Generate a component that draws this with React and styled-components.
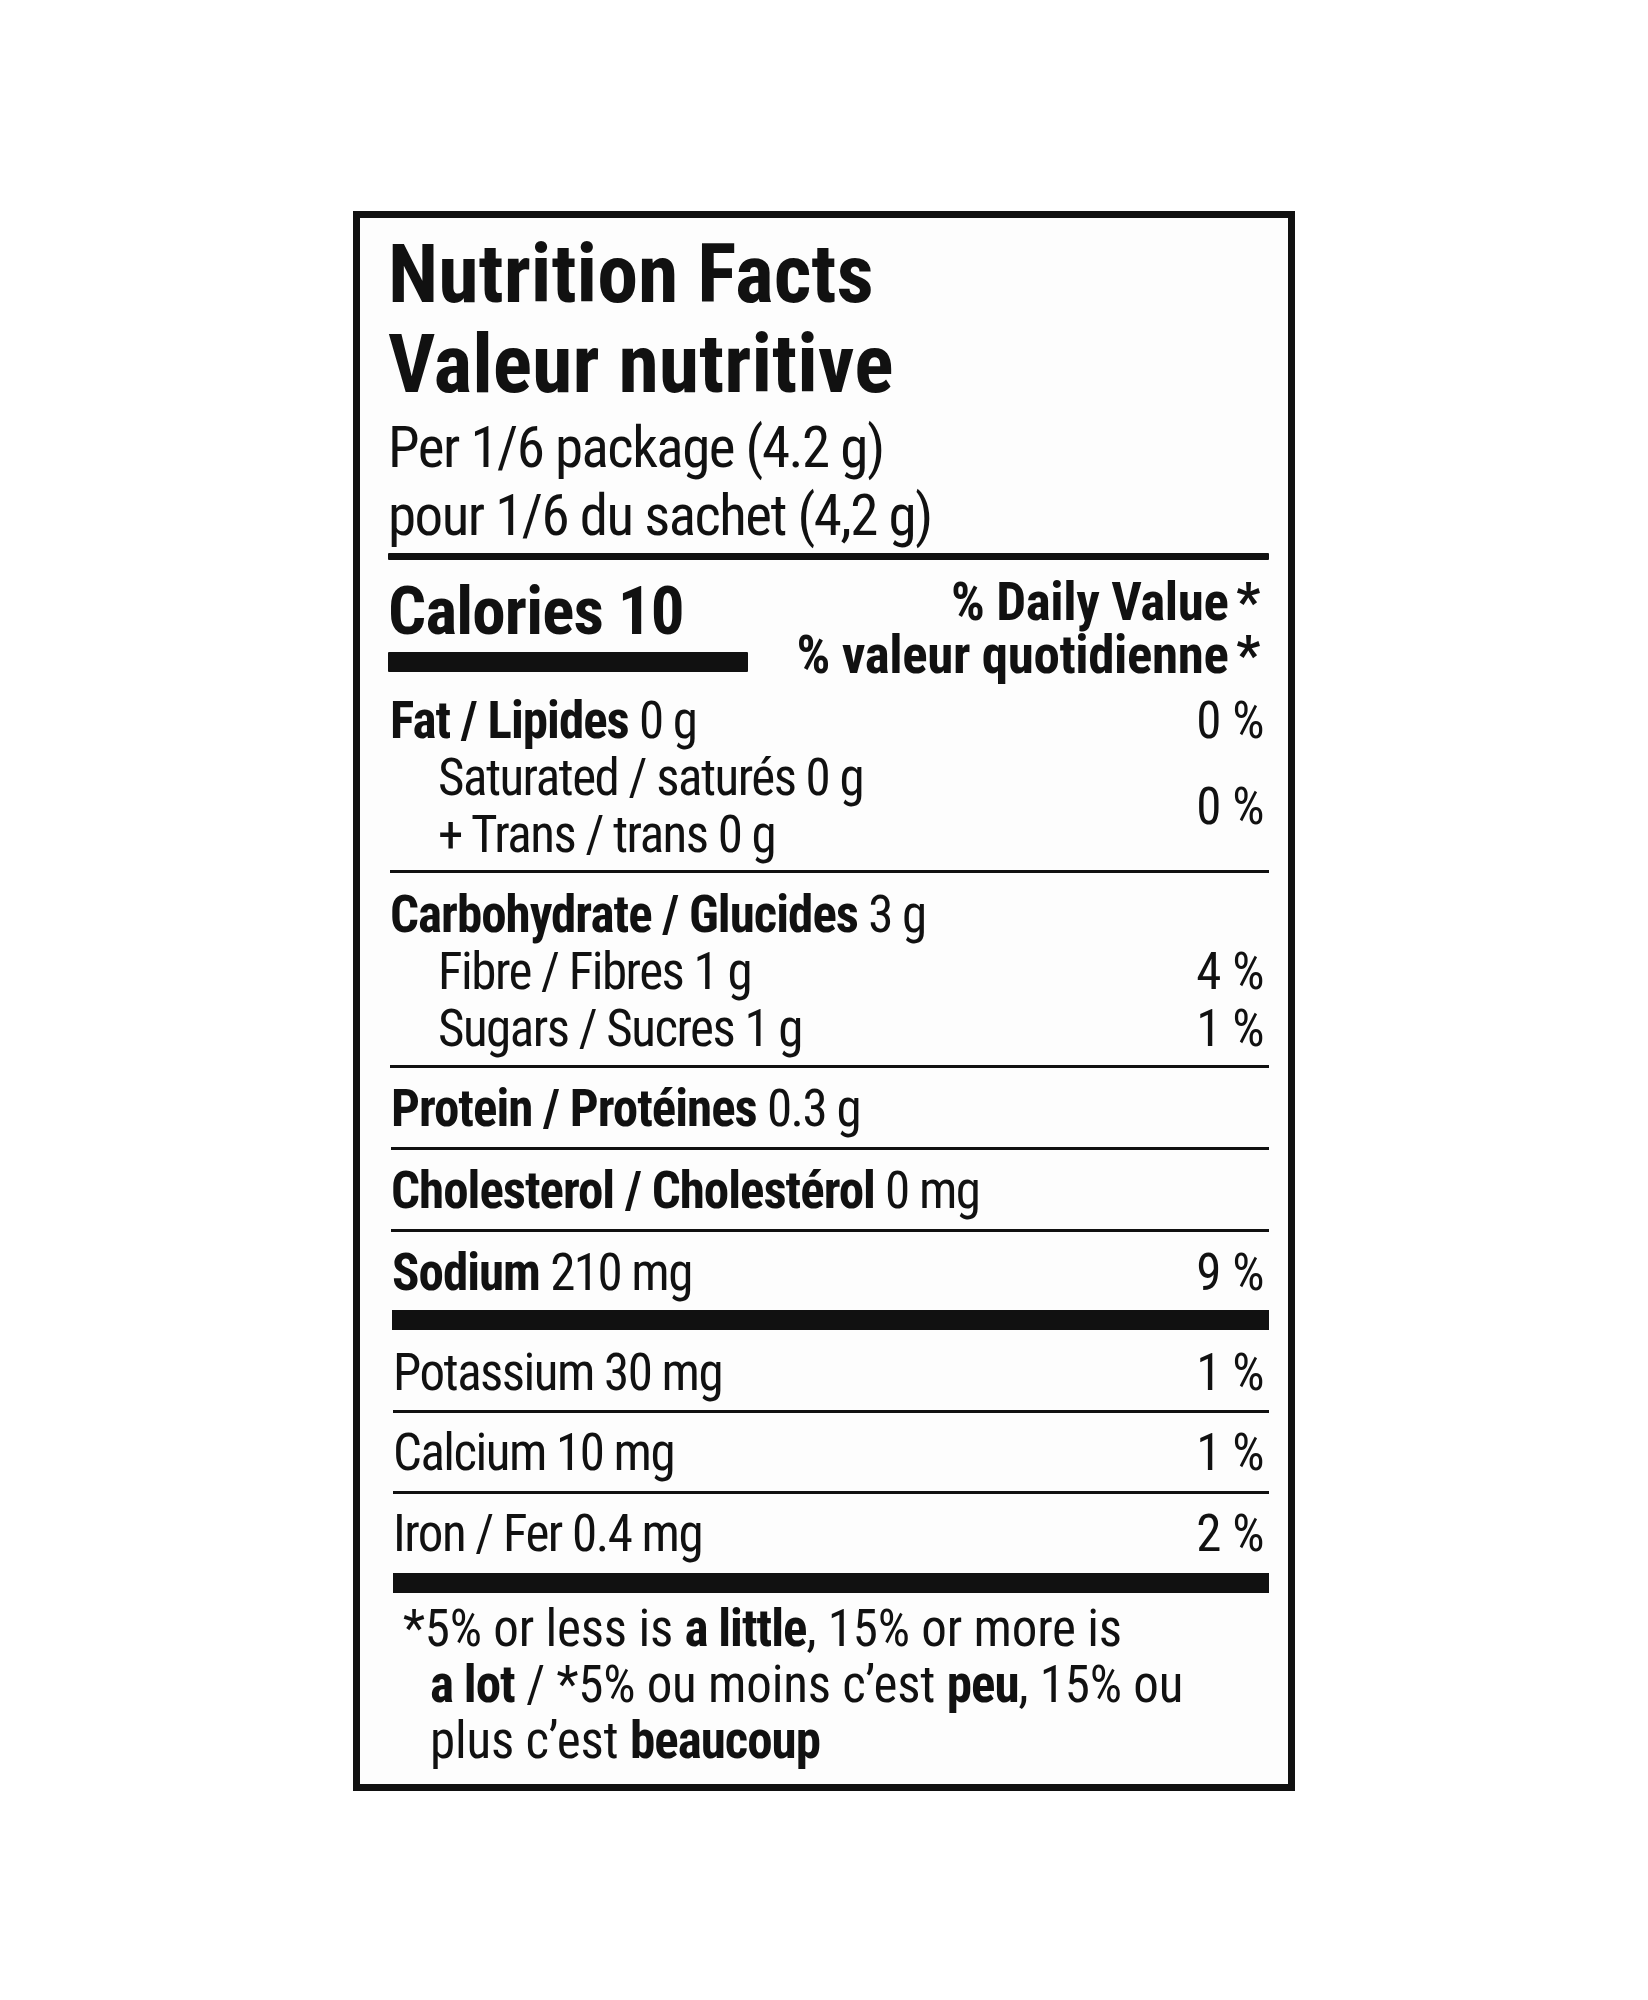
import React from 'react';
import styled, { createGlobalStyle } from 'styled-components';

const FONT = `'Roboto Condensed', 'Liberation Sans', sans-serif`;

const Global = createGlobalStyle`
  html, body { margin: 0; padding: 0; background: #ffffff; }
  body { font-family: ${FONT}; color: #111111; }
`;

const Page = styled.div`
  box-sizing: border-box;
  min-height: 2000px;
  padding: 211px 0 0 353px;
`;

const Label = styled.section`
  box-sizing: border-box;
  width: 942px;
  border: 7px solid #111111;
  background: #fdfdfd;
  padding: 11px 19px 15px 28px;
  display: flex;
  flex-direction: column;
`;

const Title = styled.h1`
  margin: 0;
  font-size: 82px;
  line-height: 90px;
  font-weight: 700;
`;

const Serving = styled.p`
  margin: ${p => (p.$first ? '5px' : '0')} 0 0;
  font-size: 57px;
  line-height: 68px;
  font-weight: 400;
  letter-spacing: -1.5px;
`;

const Bar = styled.div`
  height: ${p => p.$h}px;
  margin-top: ${p => p.$mt || 0}px;
  width: ${p => p.$w || '100%'};
  background: #111111;
  border-radius: 1px;
`;

const CaloriesSection = styled.div`
  display: flex;
  justify-content: space-between;
  align-items: flex-start;
  padding: 15px 0 10px;
`;

const CaloriesCol = styled.div`
  display: flex;
  flex-direction: column;
`;

const Calories = styled.div`
  font-size: 67px;
  line-height: 72px;
  font-weight: 700;
  letter-spacing: -0.8px;
`;

const DailyValue = styled.div`
  margin-top: 1px;
  padding-right: 9px;
  text-align: right;
  font-size: 53px;
  line-height: 53px;
  font-weight: 700;
  letter-spacing: -0.4px;
`;

const Star = styled.span`
  margin-left: 8px;
`;

const Section = styled.div`
  display: grid;
  grid-template-columns: 1fr auto;
  margin-left: ${p => p.$inset || 0}px;
  padding: ${p => p.$pt}px 0 ${p => p.$pb}px;
  border-bottom: ${p => p.$rule}px solid #111111;
  font-size: 51px;
  line-height: 57px;
  letter-spacing: -1.5px;
`;

const Name = styled.div`
  grid-column: 1;
  padding-left: ${p => (p.$indent ? 48 : 0)}px;
  white-space: nowrap;
`;

const Val = styled.div`
  grid-column: 2;
  grid-row: ${p => (p.$span ? `span ${p.$span}` : 'auto')};
  align-self: center;
  padding-right: 5px;
  text-align: right;
  white-space: nowrap;
  letter-spacing: -0.5px;
`;

const B = styled.b`
  font-weight: 700;
  letter-spacing: -1px;
`;

const Foot = styled.p`
  margin: 0;
  padding: 8px 0 0 42px;
  text-indent: -27px;
  font-size: 51px;
  line-height: 56px;
  letter-spacing: -0.2px;
`;

export default function App() {
  return (
    <Page>
      <Global />
      <Label>
        <Title>
          Nutrition Facts
          <br />
          Valeur nutritive
        </Title>
        <Serving $first>Per 1/6 package (4.2 g)</Serving>
        <Serving>pour 1/6 du sachet (4,2 g)</Serving>
        <Bar $h={7} $mt={3} />

        <CaloriesSection>
          <CaloriesCol>
            <Calories>Calories 10</Calories>
            <Bar $h={20} $mt={5} $w="360px" />
          </CaloriesCol>
          <DailyValue>
            % Daily Value<Star>*</Star>
            <br />
            % valeur quotidienne<Star>*</Star>
          </DailyValue>
        </CaloriesSection>

        <Section $pt={0} $pb={7} $rule={3} $inset={2}>
          <Name>
            <B>Fat / Lipides</B> 0 g
          </Name>
          <Val>0 %</Val>
          <Name $indent>Saturated / saturés 0 g</Name>
          <Val $span={2}>0 %</Val>
          <Name $indent>+ Trans / trans 0 g</Name>
        </Section>

        <Section $pt={13} $pb={8} $rule={3} $inset={2}>
          <Name>
            <B>Carbohydrate / Glucides</B> 3 g
          </Name>
          <Val />
          <Name $indent>Fibre / Fibres 1 g</Name>
          <Val>4 %</Val>
          <Name $indent>Sugars / Sucres 1 g</Name>
          <Val>1 %</Val>
        </Section>

        <Section $pt={12} $pb={10} $rule={3} $inset={3}>
          <Name>
            <B>Protein / Protéines</B> 0.3 g
          </Name>
          <Val />
        </Section>

        <Section $pt={12} $pb={10} $rule={3} $inset={3}>
          <Name>
            <B>Cholesterol / Cholestérol</B> 0 mg
          </Name>
          <Val />
        </Section>

        <Section $pt={12} $pb={9} $rule={20} $inset={4}>
          <Name>
            <B>Sodium</B> 210 mg
          </Name>
          <Val>9 %</Val>
        </Section>

        <Section $pt={14} $pb={9} $rule={3} $inset={5}>
          <Name>Potassium 30 mg</Name>
          <Val>1 %</Val>
        </Section>

        <Section $pt={11} $pb={10} $rule={3} $inset={5}>
          <Name>Calcium 10 mg</Name>
          <Val>1 %</Val>
        </Section>

        <Section $pt={11} $pb={11} $rule={20} $inset={5}>
          <Name>Iron / Fer 0.4 mg</Name>
          <Val>2 %</Val>
        </Section>

        <Foot>
          *5% or less is <B>a little</B>, 15% or more is
          <br />
          <B>a lot</B> / *5% ou moins c’est <B>peu</B>, 15% ou
          <br />
          plus c’est <B>beaucoup</B>
        </Foot>
      </Label>
    </Page>
  );
}
